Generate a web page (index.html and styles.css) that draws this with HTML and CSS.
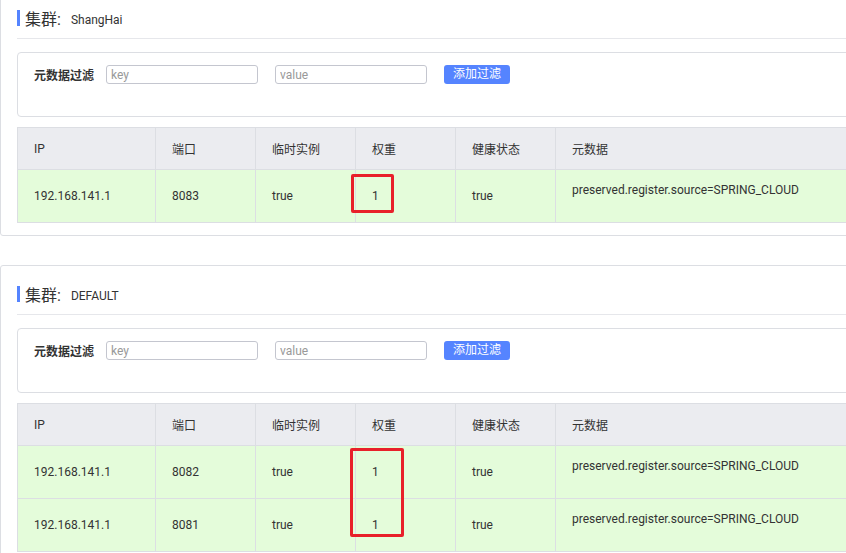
FILE: index.html
```html
<!DOCTYPE html>
<html lang="zh">
<head>
<meta charset="utf-8">
<title>集群</title>
<link rel="stylesheet" href="styles.css">
</head>
<body>
<div class="page">
  <section class="card">
    <div class="title"><span class="title-text">集群:</span><span class="cluster-name">ShangHai</span></div>
    <div class="divider"></div>
    <div class="filter">
      <div class="filter-row">
        <span class="filter-label">元数据过滤</span>
        <input class="filter-input" type="text" placeholder="key">
        <input class="filter-input" type="text" placeholder="value">
        <button class="btn-primary" type="button">添加过滤</button>
      </div>
    </div>
    <div class="table-wrap">
      <table class="grid">
        <colgroup><col class="c-ip"><col class="c-n"><col class="c-n"><col class="c-n"><col class="c-n"><col></colgroup>
        <thead>
          <tr><th>IP</th><th>端口</th><th>临时实例</th><th>权重</th><th>健康状态</th><th>元数据</th></tr>
        </thead>
        <tbody>
          <tr><td>192.168.141.1</td><td>8083</td><td>true</td><td>1</td><td>true</td><td class="meta">preserved.register.source=SPRING_CLOUD</td></tr>
        </tbody>
      </table>
      <div class="mark mark-one"></div>
    </div>
  </section>

  <section class="card">
    <div class="title"><span class="title-text">集群:</span><span class="cluster-name">DEFAULT</span></div>
    <div class="divider"></div>
    <div class="filter">
      <div class="filter-row">
        <span class="filter-label">元数据过滤</span>
        <input class="filter-input" type="text" placeholder="key">
        <input class="filter-input" type="text" placeholder="value">
        <button class="btn-primary" type="button">添加过滤</button>
      </div>
    </div>
    <div class="table-wrap">
      <table class="grid">
        <colgroup><col class="c-ip"><col class="c-n"><col class="c-n"><col class="c-n"><col class="c-n"><col></colgroup>
        <thead>
          <tr><th>IP</th><th>端口</th><th>临时实例</th><th>权重</th><th>健康状态</th><th>元数据</th></tr>
        </thead>
        <tbody>
          <tr><td>192.168.141.1</td><td>8082</td><td>true</td><td>1</td><td>true</td><td class="meta">preserved.register.source=SPRING_CLOUD</td></tr>
          <tr><td>192.168.141.1</td><td>8081</td><td>true</td><td>1</td><td>true</td><td class="meta">preserved.register.source=SPRING_CLOUD</td></tr>
        </tbody>
      </table>
      <div class="mark mark-two"></div>
    </div>
  </section>
</div>
</body>
</html>
```

FILE: styles.css
```css
html, body {
  margin: 0;
  padding: 0;
  background: #ffffff;
  overflow: hidden;
}

body {
  font-family: Roboto, "Noto Sans CJK SC", sans-serif;
  font-size: 12px;
  color: #333333;
}

.page {
  width: 1100px;
  margin-top: -11px;
}

.card {
  border: 1px solid #dcdee3;
  border-radius: 3px;
  padding: 20px 16px 12px 16px;
  margin-bottom: 29px;
}

.title {
  border-left: 3px solid #5584ff;
  padding-left: 5px;
  height: 16px;
  display: flex;
  align-items: flex-start;
  color: #333333;
}

.title-text {
  font-size: 16px;
  line-height: 20px;
}

.cluster-name {
  font-size: 12px;
  line-height: 20px;
  margin-left: 10px;
  color: #333333;
}

.divider {
  height: 1px;
  background: #e6e7eb;
  margin-top: 12px;
}

.filter {
  margin-top: 13px;
  border: 1px solid #dcdee3;
  border-radius: 4px;
  padding: 12px 16px 0 16px;
  box-sizing: border-box;
  height: 65px;
}

.filter-row {
  display: flex;
  align-items: center;
  height: 19px;
}

.filter-label {
  font-weight: 600;
  color: #333333;
  width: 60px;
  margin-right: 12px;
  white-space: nowrap;
}

.filter-input {
  width: 152px;
  height: 19px;
  box-sizing: border-box;
  border: 1px solid #c4c6cf;
  border-radius: 3px;
  padding: 0 4px;
  margin: 0 17px 0 0;
  font-family: Roboto, "Noto Sans CJK SC", sans-serif;
  font-size: 12px;
  color: #333333;
  outline: none;
}

.filter-input::placeholder {
  color: #999999;
}

.btn-primary {
  width: 66px;
  height: 19px;
  border: none;
  border-radius: 3px;
  background: #5584ff;
  color: #ffffff;
  font-family: Roboto, "Noto Sans CJK SC", sans-serif;
  font-size: 12px;
  padding: 0;
  line-height: 19px;
}

.table-wrap {
  position: relative;
  margin-top: 10px;
}

.grid {
  border-collapse: collapse;
  width: 1066px;
  table-layout: fixed;
}

.c-ip { width: 138px; }
.c-n { width: 100px; }

.grid th,
.grid td {
  border: 1px solid #dcdee3;
  text-align: left;
  padding: 0 0 0 16px;
  font-weight: normal;
  color: #333333;
  white-space: nowrap;
}

.grid th {
  background: #ebecf0;
  height: 41px;
}

.grid td {
  background: #e4fcda;
  height: 52px;
}

.grid td.meta {
  vertical-align: top;
  padding-top: 13px;
  height: 39px;
}

.mark {
  position: absolute;
  border: 3px solid #e8202a;
  border-radius: 2px;
  box-sizing: border-box;
}

.mark-one {
  left: 334px;
  top: 47px;
  width: 43px;
  height: 39px;
}

.mark-two {
  left: 333px;
  top: 45px;
  width: 54px;
  height: 89px;
}
```
